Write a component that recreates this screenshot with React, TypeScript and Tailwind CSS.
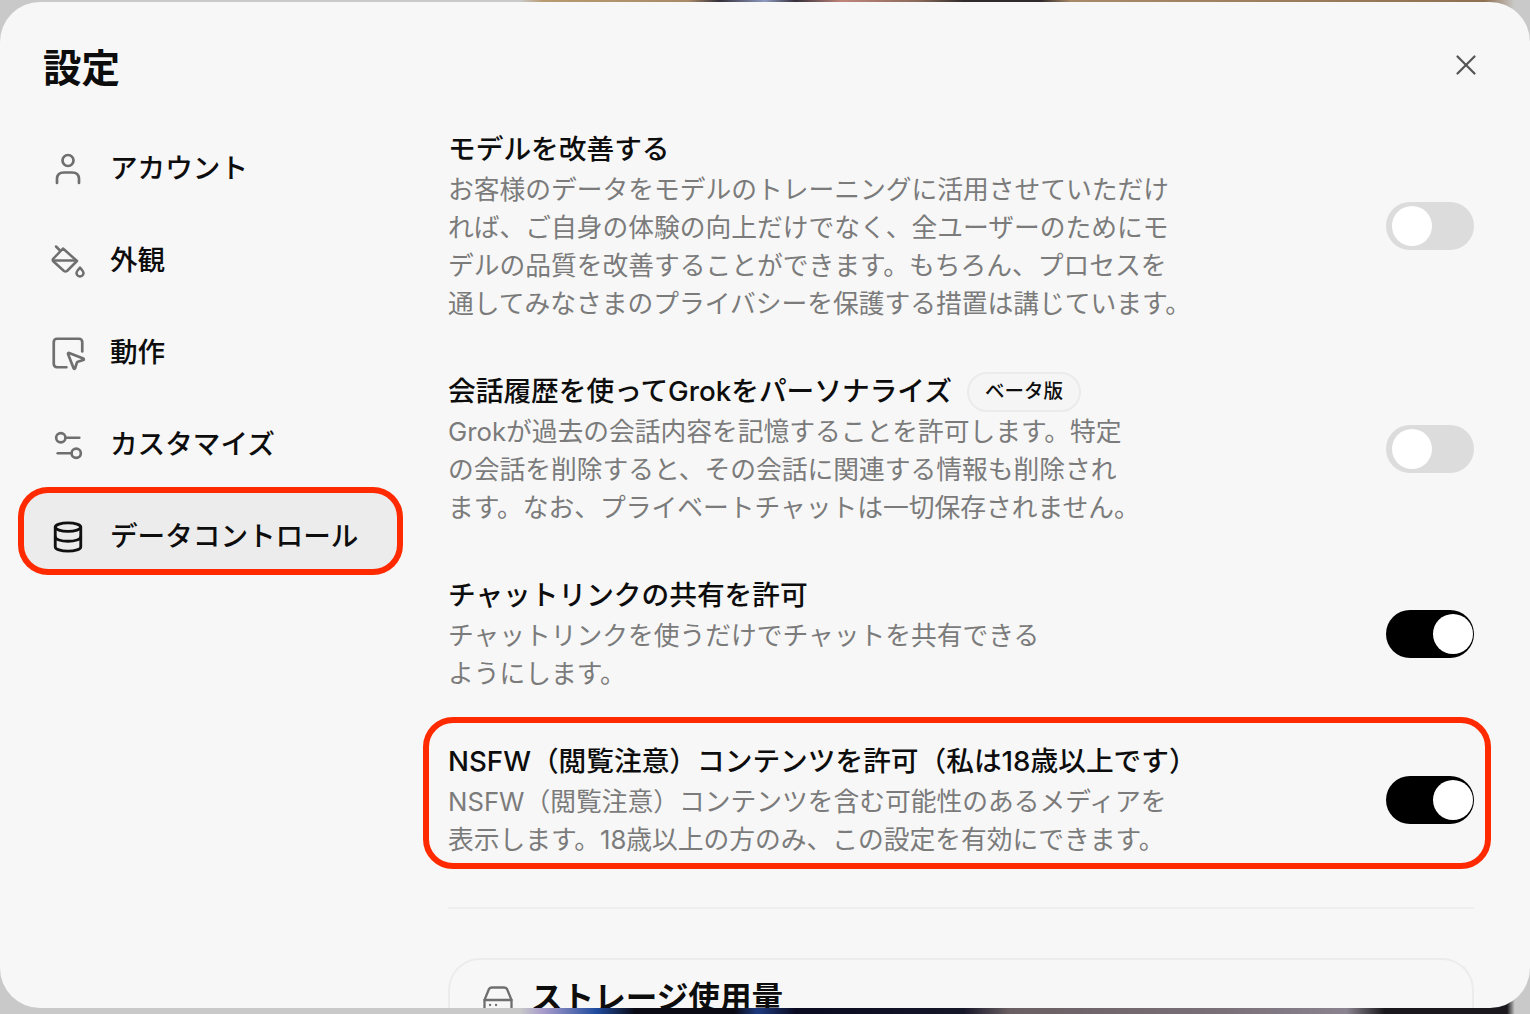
import { Database, Settings2, SquareMousePointer, X } from "lucide-react";

const jp = "font-['Inter','Noto_Sans_CJK_JP',sans-serif]";

const PaintIcon = () => (
    <svg className="-ml-[3px]" width="38" height="36" viewBox="0 0 36 36" fill="none" stroke="currentColor" strokeWidth="2.500" strokeLinecap="round" strokeLinejoin="round">
        <path d="M7 3.500 L11 7.500" />
        <path d="M14 5.500 L28 18 L18 28 Q16.500 29 15 28 L4.500 18.500 Q3 17 4.500 15.500 Z" />
        <path d="M4.500 17.500 H27" />
        <path d="M31 24.500 Q27.500 28.500 27.500 30 A3.500 3.500 0 0 0 34.500 30 Q34.500 28.500 31 24.500 Z" />
    </svg>
);

const UserIcon = () => (
    <svg width="36" height="36" viewBox="0 0 36 36" fill="none" stroke="currentColor" strokeWidth="2.700" strokeLinecap="round">
        <circle cx="18" cy="9.500" r="5.500" />
        <path d="M7 32 V28 Q7 21.500 14 21.500 H22 Q29 21.500 29 28 V32" />
    </svg>
);

const Toggle = ({ on }: { on?: boolean }) => (
    <div className={`flex h-12 w-[88px] shrink-0 items-center rounded-full ${on ? "justify-end bg-black pr-[1px]" : "justify-start bg-[#dcdcdc] pl-[6px]"}`}>
        <div className="h-10 w-10 rounded-full bg-white" />
    </div>
);

const navItems = [
    { label: "アカウント", icon: <UserIcon /> },
    { label: "外観", icon: <PaintIcon /> },
    { label: "動作", icon: <SquareMousePointer size={38} strokeWidth={1.7} /> },
    { label: "カスタマイズ", icon: <Settings2 size={37} strokeWidth={1.7} /> },
];

const Row = ({ title, lines, on, badge }: { title: string; lines: string[]; on?: boolean; badge?: boolean }) => (
    <div className="flex items-center justify-between">
        <div>
            <div className="flex h-[42px] items-center text-[27.700px] font-medium text-[#0d0d0d]">
                <span>{title}</span>
                {badge && (
                    <span className="ml-[15px] flex h-[40px] items-center rounded-full border-2 border-[#ebebeb] bg-[#f5f5f5] px-[16px] text-[19.500px] font-medium">ベータ版</span>
                )}
            </div>
            {lines.map((l) => (
                <p key={l} className="h-[38px] whitespace-nowrap text-[25.750px] leading-[38px] text-[#7b7b7b]">{l}</p>
            ))}
        </div>
        <Toggle on={on} />
    </div>
);

export default function App() {
    return (
        <div className={`${jp} h-[1014px] w-[1530px] overflow-hidden bg-[linear-gradient(90deg,#c9c9c9_34%,#b89a70_35.500%,#a98a68_45%,#35303a_47%,#8f9ac0_50%,#35303a_52%,#c0857a_55%,#8a6a5a_60%,#2f2a2c_63%,#2f2a2c_68%,#a98a68_70%,#8f7050_97%,#c9c9c9_99%),linear-gradient(90deg,#c9c9c9_34%,#a89ccb_35.500%,#1f4b9e_39%,#0a0a14_41.500%,#0a0a14_48%,#1d3a80_49.500%,#0a0a20_52%,#17172a_63%,#6a5f62_66%,#7a7078_80%,#8a8490_88%,#1a181c_90.500%,#1a181c_98.500%,#c9c9c9_99%)] bg-[size:100%_50%] bg-[position:top,bottom] bg-no-repeat pt-[2px]`}>
            <div className="flex h-[1006px] overflow-hidden rounded-[40px] bg-[#f7f7f7]">
                <aside className="flex w-[448px] shrink-0 flex-col pl-[18px]">
                    <h1 className="ml-[25px] mt-[41px] text-[38.500px] font-bold leading-[50px] text-[#0d0d0d]">設定</h1>
                    <nav className="mt-[30px] flex flex-col">
                        {navItems.map((n) => (
                            <div key={n.label} className="flex h-[92px] items-center">
                                <div className="flex w-[92px] justify-center pl-2 text-[#6f6f6f]">{n.icon}</div>
                                <span className="text-[27.600px] font-medium text-[#0d0d0d]">{n.label}</span>
                            </div>
                        ))}
                        <div className="ml-[6px] mt-[2px] flex h-[76px] w-[373px] items-center rounded-[24px] bg-[#ececec] pt-[12px] shadow-[0_0_0_6px_#ff2a00]">
                            <div className="flex w-[86px] justify-center pl-[2px] text-[#111]"><Database size={34} strokeWidth={2} /></div>
                            <span className="text-[27.600px] font-medium text-[#0d0d0d]">データコントロール</span>
                        </div>
                    </nav>
                </aside>
                <main className="relative flex-1 pr-[56px]">
                    <button className="absolute right-[47px] top-[46px] text-[#555]"><X size={34} strokeWidth={1.6} /></button>
                    <div className="mt-[127px] flex flex-col gap-[48px]">
                        <Row title="モデルを改善する" lines={["お客様のデータをモデルのトレーニングに活用させていただけ", "れば、ご自身の体験の向上だけでなく、全ユーザーのためにモ", "デルの品質を改善することができます。もちろん、プロセスを", "通してみなさまのプライバシーを保護する措置は講じています。"]} />
                        <Row badge title="会話履歴を使ってGrokをパーソナライズ" lines={["Grokが過去の会話内容を記憶することを許可します。特定", "の会話を削除すると、その会話に関連する情報も削除され", "ます。なお、プライベートチャットは一切保存されません。"]} />
                        <Row on title="チャットリンクの共有を許可" lines={["チャットリンクを使うだけでチャットを共有できる", "ようにします。"]} />
                        <div className="relative">
                            <Row on title="NSFW（閲覧注意）コンテンツを許可（私は18歳以上です）" lines={["NSFW（閲覧注意）コンテンツを含む可能性のあるメディアを", "表示します。18歳以上の方のみ、この設定を有効にできます。"]} />
                            <div className="absolute -bottom-[10px] -left-[25px] -right-[17px] -top-[24px] rounded-[30px] border-[6px] border-[#ff2a00]" />
                        </div>
                    </div>
                    <div className="mt-[48px] h-[2px] bg-[#eeeeee]" />
                    <div className="mt-[49px] rounded-t-[32px] border-2 border-b-0 border-[#ececec] pb-10 pl-[33px] pt-[18px]">
                        <div className="flex items-start gap-[18px]">
                            <svg className="mt-2 text-[#6f6f6f]" width="30" height="30" viewBox="0 0 30 30" fill="none" stroke="currentColor" strokeWidth="2.300" strokeLinecap="round" strokeLinejoin="round">
                                <path d="M1.500 14 L6 3 Q7 1.500 9 1.500 H21 Q23 1.500 24 3 L28.500 14 V26 Q28.500 28 26.500 28 H3.500 Q1.500 28 1.500 26 Z" />
                                <path d="M1.500 14 H28.500" />
                                <path d="M7 19 H7.100 M13 19 H13.100" />
                            </svg>
                            <span className="text-[31.600px] font-bold leading-[40px] text-[#0d0d0d]">ストレージ使用量</span>
                        </div>
                    </div>
                </main>
            </div>
        </div>
    );
}
